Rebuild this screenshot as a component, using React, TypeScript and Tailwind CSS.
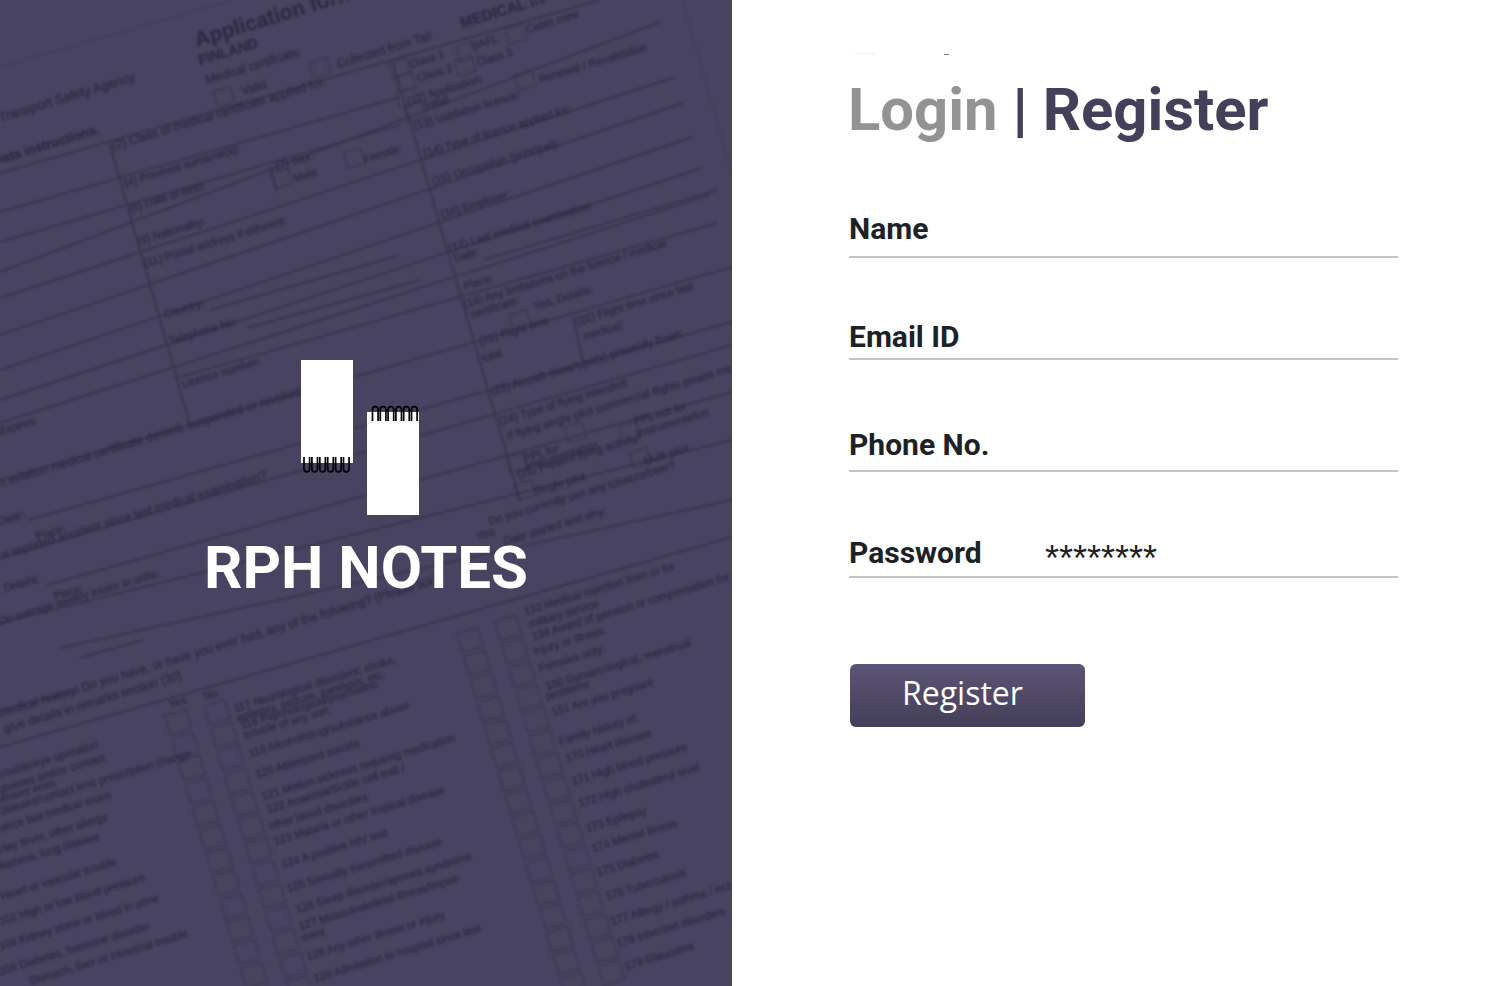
const fields = [
  { label: 'Name', rowClass: 'h-[60px] pb-[9px]' },
  { label: 'Email ID', rowClass: 'h-[102px] pb-[3px]' },
  { label: 'Phone No.', rowClass: 'h-[112px] pb-[7px]' },
  { label: 'Password', value: '********', rowClass: 'h-[106px] pb-[5px]' },
]

// backdrop lines, in page pixels: x1 y1 x2 y2
const formLines = [
  [110, 145, 190, 425],
  [393, 63, 520, 500],
  [573, 317, 583, 362],
  [270, 167, 277, 192],
  [0, 173, 600, 0],
  [0, 212, 400, 97],
  [0, 242, 400, 125],
  [0, 272, 660, 22],
  [0, 298, 675, 77],
  [0, 335, 683, 103],
  [0, 370, 693, 137],
  [0, 400, 702, 168],
  [0, 423, 710, 195],
  [177, 378, 717, 223],
  [0, 480, 732, 267],
  [28, 520, 732, 322],
  [0, 558, 732, 345],
  [47, 585, 732, 392],
  [0, 623, 732, 440],
  [60, 648, 732, 500],
  [0, 710, 80, 690],
  [80, 658, 143, 640],
  [0, 747, 732, 537],
  [210, 310, 400, 255],
  [247, 328, 420, 280],
  [483, 260, 717, 190],
]

const faintLines = [
  [0, 67, 233, 0],
  [682, 0, 732, 173],
]

// backdrop text, in page pixels: x y text size weight
const formTexts: [number, number, string, number?, number?][] = [
  [197, 47, 'Application form for', 21, 700],
  [200, 65, 'FINLAND', 14, 700],
  [0, 122, 'Transport Safety Agency', 13],
  [207, 84, 'Medical certificate:', 12],
  [243, 95, 'Valid', 12],
  [338, 68, 'Collected from Tail', 12],
  [-5, 165, 'Data instructions.', 13, 700],
  [113, 150, '(2) Class of medical certificate applied for:', 12],
  [125, 187, '(4) Previous surname(s):', 11],
  [277, 170, '(7) Sex:', 11],
  [365, 163, 'Female:', 11],
  [295, 182, 'Male', 11],
  [130, 212, '(6) Date of birth:', 11],
  [138, 245, '(9) Nationality:', 11],
  [145, 267, '(11) Postal address if different:', 11],
  [462, 28, 'MEDICAL IN', 15, 700],
  [527, 33, 'Cabin crew', 11],
  [410, 68, 'Class 1', 11],
  [472, 50, 'UAFL', 11],
  [418, 82, 'Class 2', 11],
  [478, 66, 'Class 3', 11],
  [408, 105, '(12) Application:', 11],
  [540, 83, 'Renewal / Revalidation', 11],
  [425, 110, 'Initial', 11],
  [415, 130, '(13) Validation licence:', 11],
  [425, 157, '(14) Type of licence applied for:', 11],
  [433, 185, '(15) Occupation (principal):', 11],
  [442, 218, '(16) Employer:', 11],
  [450, 252, '(17) Last medical examination:', 11],
  [455, 262, 'Date:', 11],
  [465, 290, 'Place:', 11],
  [465, 308, '(19) Any limitations on the licence / medical', 11],
  [472, 318, 'certificate:', 11],
  [535, 310, 'Yes, Details:', 11],
  [577, 325, '(22) Flight time since last', 11],
  [585, 340, 'medical:', 11],
  [480, 345, '(21) Flight time', 11],
  [483, 362, 'total', 11],
  [165, 318, 'Country:', 11],
  [170, 345, 'Telephone No:', 11],
  [183, 388, 'Licence number:', 11],
  [0, 435, 'Expires:', 11],
  [0, 487, 'n aviation medical certificate denied, suspended or revoked by', 12],
  [0, 525, 'Date:', 11],
  [37, 540, 'Place:', 11],
  [0, 560, 'or reported accident since last medical examination?', 12],
  [5, 592, 'Details:', 11],
  [55, 600, 'Place:', 11],
  [0, 625, 'Do average weekly intake in units:', 11],
  [492, 395, '(23) Aircraft class/type(s) presently flown:', 11],
  [500, 425, '(24) Type of flying intended:', 11],
  [508, 440, 'If flying single pilot commercial flights please mark:', 11],
  [525, 462, 'PPL for', 11],
  [527, 470, 'instrumentation', 11],
  [635, 425, 'PPL not for', 11],
  [638, 437, 'instrumentation', 11],
  [518, 478, '(25) Present flying activity:', 11],
  [645, 465, 'Multi pilot', 11],
  [535, 495, 'Single pilot', 11],
  [490, 525, 'Do you currently use any tobacco/beer?', 11],
  [478, 540, 'Yes', 11],
  [505, 545, 'Date started and why:', 11],
  [525, 615, '133 Medical rejection from or for', 11],
  [530, 628, 'military service', 11],
  [533, 640, '134 Award of pension or compensation for', 11],
  [535, 655, 'injury or illness', 11],
  [540, 672, 'Females only:', 11],
  [547, 690, '150 Gynaecological, menstrual', 11],
  [547, 700, 'problems', 11],
  [553, 716, '151 Are you pregnant', 11],
  [560, 745, 'Family history of:', 11],
  [567, 762, '170 Heart disease', 11],
  [573, 785, '171 High blood pressure', 11],
  [580, 807, '172 High cholesterol level', 11],
  [587, 832, '173 Epilepsy', 11],
  [593, 852, '174 Mental illness', 11],
  [598, 876, '175 Diabetes', 11],
  [607, 900, '176 Tuberculosis', 11],
  [612, 925, '177 Allergy / asthma / eczema', 11],
  [618, 947, '178 Inherited disorders', 11],
  [626, 970, '179 Glaucoma', 11],
  [235, 712, '117 Neurological disorders; stroke,', 11],
  [238, 722, 'epilepsy, seizure, paralysis, etc.', 11],
  [242, 729, '118 Psychological/psychiatric', 11],
  [245, 739, 'trouble of any sort', 11],
  [250, 757, '119 Alcohol/drug/substance abuse', 11],
  [257, 778, '120 Attempted suicide', 11],
  [263, 800, '121 Motion sickness requiring medication', 11],
  [268, 813, '122 Anaemia/Sickle cell trait /', 11],
  [270, 830, 'other blood disorders', 11],
  [275, 845, '123 Malaria or other tropical disease', 11],
  [283, 868, '124 A positive HIV test', 11],
  [288, 892, '125 Sexually transmitted disease', 11],
  [297, 913, '126 Sleep disorder/apnoea syndrome', 11],
  [300, 930, '127 Musculoskeletal illness/impair-', 11],
  [302, 942, 'ment', 11],
  [308, 960, '128 Any other illness or injury', 11],
  [315, 982, '129 Admission to hospital since last', 11],
  [0, 717, 'medical history: Do you have, or have you ever had, any of the following? (Please tick)', 12],
  [5, 733, 'give details in remarks section (30)', 12],
  [170, 708, 'Yes', 11],
  [205, 700, 'No', 11],
  [0, 778, 'trouble/eye operation', 11],
  [0, 793, 'glasses and/or contact', 11],
  [0, 803, 'lenses worn', 11],
  [0, 815, 'Glasses/contact lens prescription change', 11],
  [0, 832, 'since last medical exam', 11],
  [0, 853, 'Hay fever, other allergy', 11],
  [0, 870, 'Asthma, lung disease', 11],
  [2, 900, 'Heart or vascular trouble', 11],
  [0, 925, '102 High or low blood pressure', 11],
  [0, 950, '108 Kidney stone or blood in urine', 11],
  [0, 975, '109 Diabetes, hormone disorder', 11],
  [30, 985, 'Stomach, liver or intestinal trouble', 11],
]

// checkbox columns on the form: first box centre and how many
const boxColumns = [
  { x: 178, y: 722, count: 13 },
  { x: 217, y: 712, count: 13 },
  { x: 470, y: 640, count: 16 },
  { x: 508, y: 628, count: 16 },
]

const singleBoxes = [
  [224, 97], [320, 68], [400, 68], [467, 52], [516, 34], [405, 82], [465, 66], [407, 98], [525, 80],
  [415, 112], [282, 178], [354, 158], [520, 320], [575, 432], [517, 463], [630, 432], [640, 458], [525, 490],
]

function NotesLogo() {
  const coils = [0, 1, 2, 3, 4, 5]
  return (
    <svg width="118" height="155" viewBox="0 0 118 155" className="block">
      <rect x="0" y="0" width="52" height="103" fill="#fff" />
      <rect x="66" y="52" width="52" height="103" fill="#fff" />
      {coils.map((i) => (
        <path key={i} d={`M${3 + i * 7.9} 97v12a2.8 2.8 0 0 0 5.6 0v-12`} fill="none" stroke="#000" strokeWidth="1.7" />
      ))}
      {coils.map((i) => (
        <path key={i} d={`M${71.5 + i * 7.8} 61v-11.5a2.8 2.8 0 0 1 5.6 0v11.5`} fill="none" stroke="#000" strokeWidth="1.7" />
      ))}
    </svg>
  )
}

function FormBackdrop() {
  return (
    <svg width="732" height="986" viewBox="0 0 732 986" className="block">
      <g stroke="#36324b" fill="none" strokeWidth="1.5">
        {formLines.map(([x1, y1, x2, y2], i) => (
          <line key={i} x1={x1} y1={y1} x2={x2} y2={y2} />
        ))}
        {faintLines.map(([x1, y1, x2, y2], i) => (
          <line key={i} x1={x1} y1={y1} x2={x2} y2={y2} strokeOpacity="0.35" strokeWidth="1" />
        ))}
        {boxColumns.map((col) =>
          Array.from({ length: col.count }, (_, i) => (
            <rect
              key={`${col.x}-${i}`}
              x={-11}
              y={-10}
              width="22"
              height="20"
              strokeOpacity="0.55"
              transform={`translate(${col.x + i * 6.9} ${col.y + i * 23}) rotate(-17)`}
            />
          ))
        )}
        {singleBoxes.map(([x, y]) => (
          <rect key={`${x}-${y}`} x={-9} y={-8} width="18" height="16" strokeOpacity="0.55" transform={`translate(${x} ${y}) rotate(-17)`} />
        ))}
      </g>
      <g fill="#2f2b43" stroke="#2f2b43" strokeWidth="0.3" fontFamily="'Liberation Sans', sans-serif">
        {formTexts.map(([x, y, text, size = 11, weight = 400]) => (
          <text key={`${x}-${y}`} x={x} y={y} fontSize={size} fontWeight={weight} transform={`rotate(-17 ${x} ${y})`}>
            {text}
          </text>
        ))}
      </g>
    </svg>
  )
}

export default function App() {
  return (
    <div className="w-[1500px] h-[986px] flex bg-white overflow-hidden font-['Roboto',sans-serif]">
      <div className="relative w-[732px] h-full bg-[#484360] overflow-hidden">
        <div className="absolute inset-0 blur-[1px]">
          <FormBackdrop />
        </div>
        <div className="relative h-full flex flex-col items-center pt-[360px]">
          <div className="mr-[12px]">
            <NotesLogo />
          </div>
          <div className="mt-[18px] text-white text-[60px] leading-[70px] font-bold">RPH NOTES</div>
        </div>
      </div>
      <div className="relative flex-1 pl-[116px] pr-[102px] pt-[74px]">
        <div className="absolute left-[212px] top-[54px] w-[5px] h-px bg-[#777777]" />
        <div className="absolute left-[122px] top-[53px] w-[22px] h-px bg-[#f2f2f2]" />
        <div className="text-[59.8px] leading-[72px] font-bold text-[#454059]">
          <span className="text-[#939393]">Login</span> <span className="font-black">|</span> Register
        </div>
        <div className="mt-[52px] ml-px flex flex-col">
          {fields.map((f) => (
            <div key={f.label} className={`${f.rowClass} flex items-end border-b-2 border-[#c4c4c4] text-[30px] leading-[36px] font-bold text-[#1c2226]`}>
              <span className="w-[196px]">{f.label}</span>
              {f.value && <span className="mb-[-6px] font-['Liberation_Sans',sans-serif] font-normal text-[36px] leading-[36px]">{f.value}</span>}
            </div>
          ))}
        </div>
        <button className="block mt-[86px] ml-[2px] w-[235px] h-[63px] pb-[6px] rounded-[6px] bg-gradient-to-b from-[#5c5475] to-[#443f58] text-white text-[32px] text-left pl-[52px] font-['Open_Sans',sans-serif]">
          Register
        </button>
      </div>
    </div>
  )
}
